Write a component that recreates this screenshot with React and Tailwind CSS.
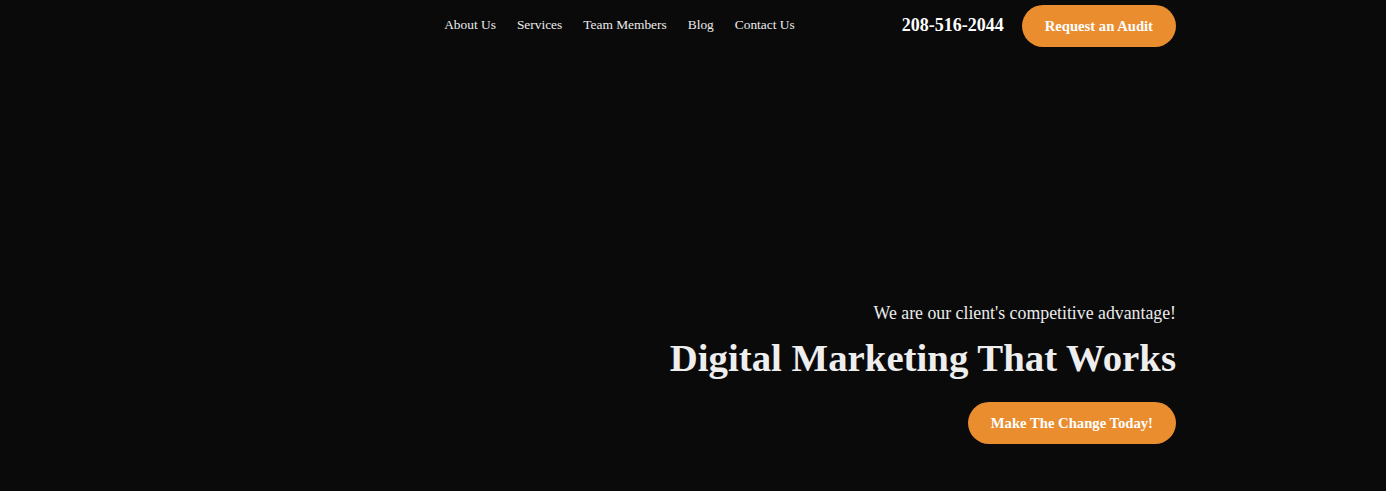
export default function App() {
  const links = ['About Us', 'Services', 'Team Members', 'Blog', 'Contact Us'];

  return (
    <div className="min-h-[491px] bg-[#0a0a0a] text-[#ececec] font-['Liberation_Serif','Times_New_Roman',serif]">
      {/* Header */}
      <header className="w-[966px] mx-auto pt-[5px] flex items-center justify-end">
        <nav className="flex items-center gap-[21px] text-[13.4px] text-[#ececec] mr-[107px] -mt-[2px]">
          {links.map((l) => (
            <a key={l} href="#" className="whitespace-nowrap">
              {l}
            </a>
          ))}
        </nav>
        <a href="#" className="text-[18px] font-bold text-white mr-[18px] -mt-[1px]">
          208-516-2044
        </a>
        <button className="h-[42px] px-[23px] rounded-full bg-[#ea8d2f] text-white font-bold text-[14.67px]">
          Request an Audit
        </button>
      </header>

      {/* Hero */}
      <section className="w-[966px] mx-auto flex flex-col items-end pt-[255px]">
        <p className="text-[17.8px] leading-[22px]">We are our client's competitive advantage!</p>
        <h1 className="mt-[12px] text-[38.8px] leading-[44px] font-bold text-[#eeeeee]">
          Digital Marketing That Works
        </h1>
        <button className="mt-[22px] h-[42px] px-[23px] rounded-full bg-[#ea8d2f] text-white font-bold text-[14.67px]">
          Make The Change Today!
        </button>
      </section>
    </div>
  );
}
